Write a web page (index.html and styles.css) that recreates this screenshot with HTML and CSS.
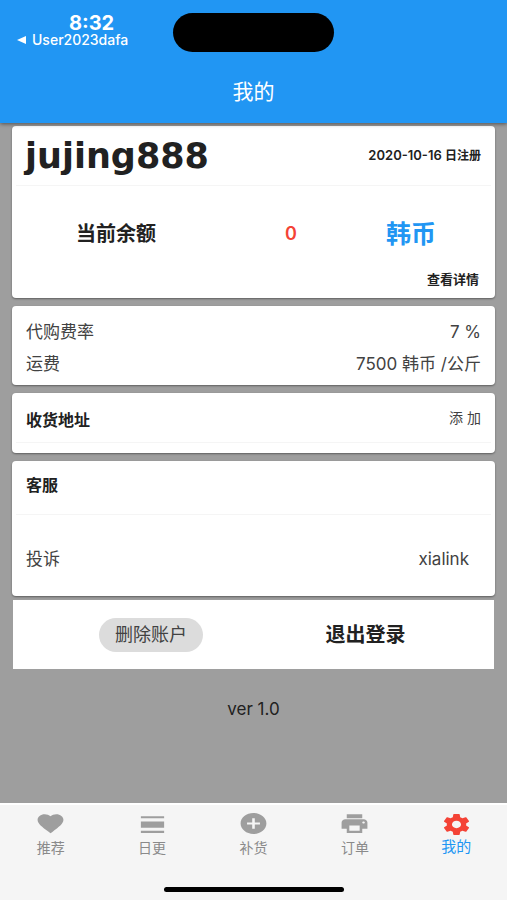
FILE: index.html
```html
<!DOCTYPE html>
<html lang="zh-CN">
<head>
<meta charset="utf-8">
<meta name="viewport" content="width=device-width, initial-scale=1">
<title>我的</title>
<link rel="stylesheet" href="styles.css">
</head>
<body>
<header class="header">
  <div class="status">
    <div class="status-left">
      <span class="clock">8:32</span>
      <a class="back" href="#"><svg class="back-arrow" viewBox="0 0 9 8" aria-hidden="true"><path d="M9 0v8L0 4z"/></svg>User2023dafa</a>
    </div>
    <div class="island"></div>
  </div>
  <h1 class="title">我的</h1>
</header>

<main class="content">
  <section class="card">
    <div class="profile">
      <h2 class="name">jujing888</h2>
      <span class="joined">2020-10-16 <span class="joined-note">日注册</span></span>
    </div>
    <div class="balance">
      <span class="balance-label">当前余额</span>
      <span class="balance-value">0</span>
      <span class="balance-unit">韩币</span>
    </div>
    <div class="details"><a href="#">查看详情</a></div>
  </section>

  <section class="card rates">
    <div class="row"><span>代购费率</span><span>7 %</span></div>
    <div class="row"><span>运费</span><span>7500 韩币 /公斤</span></div>
  </section>

  <section class="card address">
    <div class="card-head"><h3>收货地址</h3><a class="add" href="#">添 加</a></div>
  </section>

  <section class="card">
    <div class="card-head service-head"><h3>客服</h3></div>
    <div class="complaint"><span>投诉</span><span>xialink</span></div>
  </section>

  <section class="actions">
    <button class="chip" type="button">删除账户</button>
    <button class="logout" type="button">退出登录</button>
  </section>

  <p class="version">ver 1.0</p>
</main>

<nav class="tabs">
  <div class="tab-row">
    <a class="tab" href="#"><svg viewBox="0 0 24 24" preserveAspectRatio="none" aria-hidden="true"><path d="M12 21.35l-1.45-1.32C5.4 15.36 2 12.28 2 8.5 2 5.42 4.42 3 7.5 3c1.74 0 3.41.81 4.5 2.09C13.09 3.81 14.76 3 16.5 3 19.58 3 22 5.42 22 8.5c0 3.78-3.4 6.86-8.55 11.54L12 21.35z"/></svg>推荐</a>
    <a class="tab" href="#"><svg viewBox="0 0 24 24" preserveAspectRatio="none" aria-hidden="true"><path d="M3 19h18v2H3zM3 10h18v6H3zM3 5h18v2H3z"/></svg>日更</a>
    <a class="tab" href="#"><svg viewBox="0 0 24 24" preserveAspectRatio="none" aria-hidden="true"><path d="M12 2C6.48 2 2 6.48 2 12s4.48 10 10 10 10-4.48 10-10S17.52 2 12 2zm5 11h-4v4h-2v-4H7v-2h4V7h2v4h4v2z"/></svg>补货</a>
    <a class="tab" href="#"><svg viewBox="0 0 24 24" preserveAspectRatio="none" aria-hidden="true"><path d="M19 8H5c-1.66 0-3 1.34-3 3v6h4v4h12v-4h4v-6c0-1.66-1.34-3-3-3zm-3 11H8v-5h8v5zm3-7c-.55 0-1-.45-1-1s.45-1 1-1 1 .45 1 1-.45 1-1 1zm-1-9H6v4h12V3z"/></svg>订单</a>
    <a class="tab active" href="#" aria-current="page"><svg viewBox="0 0 24 24" preserveAspectRatio="none" aria-hidden="true"><path d="M19.43 12.98c.04-.32.07-.64.07-.98s-.03-.66-.07-.98l2.11-1.65c.19-.15.24-.42.12-.64l-2-3.46c-.12-.22-.39-.3-.61-.22l-2.49 1c-.52-.4-1.08-.73-1.69-.98l-.38-2.65C14.46 2.18 14.25 2 14 2h-4c-.25 0-.46.18-.49.42l-.38 2.65c-.61.25-1.17.59-1.69.98l-2.49-1c-.23-.09-.49 0-.61.22l-2 3.46c-.13.22-.07.49.12.64l2.11 1.65c-.04.32-.07.65-.07.98s.03.66.07.98l-2.11 1.65c-.19.15-.24.42-.12.64l2 3.46c.12.22.39.3.61.22l2.49-1c.52.4 1.08.73 1.69.98l.38 2.65c.03.24.24.42.49.42h4c.25 0 .46-.18.49-.42l.38-2.65c.61-.25 1.17-.59 1.69-.98l2.49 1c.23.09.49 0 .61-.22l2-3.46c.12-.22.07-.49-.12-.64l-2.11-1.65zM12 15.5c-1.93 0-3.5-1.57-3.5-3.5s1.57-3.5 3.5-3.5 3.5 1.57 3.5 3.5-1.57 3.5-3.5 3.5z"/></svg>我的</a>
  </div>
  <div class="home-bar"></div>
</nav>
</body>
</html>
```
FILE: styles.css
```css
* {
  box-sizing: border-box;
}

body {
  margin: 0;
  min-height: 100vh;
  display: flex;
  flex-direction: column;
  background: #9e9e9e;
  color: #212121;
  font-family: Inter, "Noto Sans CJK SC", sans-serif;
  font-size: 17px;
  line-height: 24px;
}

h1, h2, h3, p {
  margin: 0;
}

a {
  color: inherit;
  text-decoration: none;
}

button {
  border: 0;
  padding: 0;
  background: none;
  color: inherit;
  font: inherit;
  cursor: pointer;
}

.header {
  position: relative;
  background: #2196f3;
  color: #fff;
  box-shadow: 0 1px 4px rgba(0, 0, 0, 0.5);
}

.status {
  display: grid;
  grid-template-columns: 1fr 161px 1fr;
  padding-top: 13px;
}

.status-left {
  display: flex;
  flex-direction: column;
  padding-left: 17px;
}

.clock {
  padding-left: 52px;
  font-size: 20px;
  font-weight: 700;
  line-height: 20px;
}

.back {
  display: flex;
  align-items: center;
  gap: 6px;
  font-size: 14px;
  font-weight: 500;
  line-height: 14px;
}

.back-arrow {
  width: 9px;
  height: 8px;
  fill: currentColor;
}

.island {
  height: 39px;
  border-radius: 20px;
  background: #000;
}

.title {
  padding: 24px 0 15px;
  font-size: 21px;
  font-weight: 400;
  line-height: 32px;
  text-align: center;
}

.content {
  flex: 1;
  padding: 3px 12px 0;
}

.card {
  margin-bottom: 8px;
  padding: 0 4px;
  border-radius: 4px;
  background: #fff;
  box-shadow: 0 1px 2px rgba(0, 0, 0, 0.4);
}

.profile {
  display: flex;
  align-items: center;
  justify-content: space-between;
  height: 60px;
  padding: 0 10px 0 9px;
  border-bottom: 1px solid #f5f5f5;
}

.name {
  font-family: "DejaVu Sans", Inter, sans-serif;
  font-size: 35px;
  font-weight: 700;
  line-height: 44px;
}

.joined {
  font-size: 13px;
  font-weight: 600;
}

.joined-note {
  font-size: 12px;
}

.balance {
  display: grid;
  grid-template-columns: 200fr 150fr 90fr 35fr;
  align-items: center;
  height: 96px;
  text-align: center;
  font-weight: 600;
}

.balance-label {
  font-size: 20px;
}

.balance-value {
  color: #f44336;
  font-size: 18px;
}

.balance-unit {
  color: #2196f3;
  font-size: 25px;
}

.details {
  margin-top: -11px;
  padding: 0 12px 11px;
  font-size: 13px;
  font-weight: 600;
  line-height: 16px;
  text-align: right;
}

.rates {
  padding: 10px 14px 5px;
}

.row {
  display: flex;
  align-items: center;
  justify-content: space-between;
  height: 32px;
  color: #424242;
}

.address {
  padding-bottom: 10px;
}

.address h3 {
  padding-top: 5px;
}

.card-head {
  display: flex;
  align-items: center;
  justify-content: space-between;
  height: 50px;
  padding: 0 10px;
  border-bottom: 1px solid #f5f5f5;
}

.card-head h3 {
  font-size: 16px;
  font-weight: 600;
}

.add {
  color: #424242;
  font-size: 14px;
}

.service-head {
  height: 54px;
  padding-bottom: 5px;
}

.complaint {
  display: flex;
  align-items: center;
  justify-content: space-between;
  padding: 32px 22px 25px 10px;
  color: #424242;
}

.actions {
  display: grid;
  grid-template-columns: 276fr 153fr 52fr;
  place-items: center;
  height: 69px;
  margin: -4px 1px 0;
  background: #fff;
}

.chip {
  padding: 5px 16px;
  border-radius: 17px;
  background: #dcdcdc;
  color: #424242;
  font-size: 18px;
}

.logout {
  font-size: 20px;
  font-weight: 600;
}

.version {
  padding: 28px 0;
  text-align: center;
}

.tabs {
  padding-bottom: 8px;
  border-top: 2px solid #fff;
  background: #f5f5f5;
}

.tab-row {
  display: flex;
}

.tab {
  display: flex;
  flex: 1;
  flex-direction: column;
  align-items: center;
  gap: 1px;
  padding-top: 6px;
  color: #8a8a8a;
  font-size: 14px;
  line-height: 22px;
}

.tab svg {
  width: 31px;
  height: 25px;
  fill: #9e9e9e;
}

.tab.active {
  padding-top: 7px;
  color: #2196f3;
  font-size: 15px;
  line-height: 18px;
}

.tab.active svg {
  fill: #f44336;
}

.home-bar {
  width: 180px;
  height: 5px;
  margin: 28px auto 0;
  border-radius: 3px;
  background: #000;
}
```
